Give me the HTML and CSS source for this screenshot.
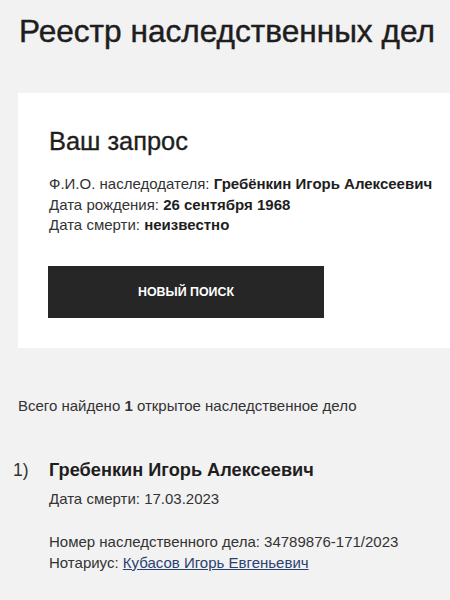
FILE: index.html
```html
<!DOCTYPE html>
<html lang="ru">
<head>
<meta charset="utf-8">
<link rel="stylesheet" href="styles.css">
</head>
<body>
<div class="page">
  <h1 class="title">Реестр наследственных дел</h1>
  <section class="card">
    <h2 class="card-title">Ваш запрос</h2>
    <div class="info">
      <div>Ф.И.О. наследодателя: <b>Гребёнкин Игорь Алексеевич</b></div>
      <div>Дата рождения: <b>26 сентября 1968</b></div>
      <div>Дата смерти: <b>неизвестно</b></div>
    </div>
    <button class="btn">НОВЫЙ ПОИСК</button>
  </section>
  <p class="total">Всего найдено <b>1</b> открытое наследственное дело</p>
  <div class="result">
    <div class="num">1)</div>
    <div class="result-body">
      <div class="name">Гребенкин Игорь Алексеевич</div>
      <div class="death">Дата смерти: 17.03.2023</div>
      <div class="details">
        <div>Номер наследственного дела: 34789876-171/2023</div>
        <div>Нотариус: <a href="#" class="link">Кубасов Игорь Евгеньевич</a></div>
      </div>
    </div>
  </div>
</div>
</body>
</html>
```

FILE: styles.css
```css
html, body {
  margin: 0;
  padding: 0;
  background: #f2f2f2;
  color: #222;
  font-family: "Liberation Sans", Arial, sans-serif;
  overflow: hidden;
}
.page {
  padding: 0 0 0 18px;
}
.title {
  margin: 0;
  padding-top: 13px;
  padding-left: 1px;
  font-size: 31.6px;
  font-weight: 400;
  line-height: 36px;
  color: #1e1e1e;
  -webkit-text-stroke: 0.45px #1e1e1e;
}
.card {
  margin-top: 44px;
  background: #fff;
  padding: 33px 0 27px 31px;
  height: 195px;
}
.card-title {
  margin: 0;
  font-size: 25.4px;
  font-weight: 400;
  line-height: 30px;
  color: #1e1e1e;
  -webkit-text-stroke: 0.35px #1e1e1e;
}
.info {
  margin-top: 18px;
  font-size: 15px;
  line-height: 20.5px;
  color: #333;
}
.info b {
  color: #1e1e1e;
}
.btn {
  margin-top: 30px;
  width: 276px;
  height: 52px;
  background: #262626;
  color: #fff;
  border: 0;
  font-family: "Liberation Sans", Arial, sans-serif;
  font-weight: 700;
  font-size: 12.4px;
  display: block;
  margin-left: -1px;
}
.total {
  margin: 48px 0 0;
  font-size: 15px;
  line-height: 20px;
  color: #333;
}
.result {
  margin-top: 42px;
  display: flex;
  margin-left: -5px;
}
.num {
  width: 36px;
  font-size: 17.5px;
  line-height: 24px;
  color: #333;
}
.name {
  font-size: 18.2px;
  font-weight: 700;
  line-height: 24px;
  color: #1e1e1e;
}
.death {
  margin-top: 6px;
  font-size: 15px;
  line-height: 21px;
  color: #333;
}
.details {
  margin-top: 22px;
  font-size: 15px;
  line-height: 21px;
  color: #333;
}
.link {
  color: #2b4170;
  text-decoration: underline;
}
```
